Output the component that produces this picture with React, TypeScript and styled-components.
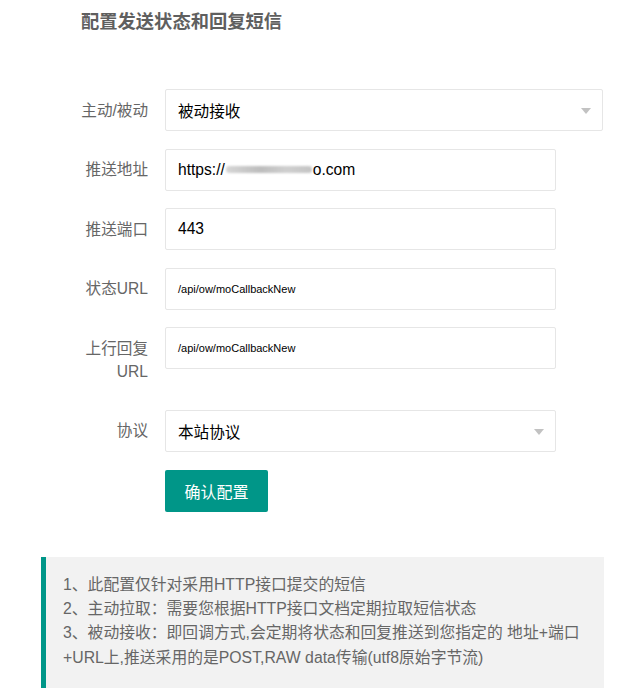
import React from "react";
import styled, { createGlobalStyle } from "styled-components";

const GlobalStyle = createGlobalStyle`
    html, body {
        margin: 0;
        padding: 0;
        background: #fff;
    }
    body {
        font-family: "Liberation Sans", "Noto Sans CJK SC", sans-serif;
        color: #666;
    }
    * {
        box-sizing: border-box;
    }
`;

const Page = styled.div`
    width: 623px;
    padding: 9px 0 11px;
`;

const Title = styled.h2`
    margin: 0 0 0 81px;
    font-size: 18.3px;
    line-height: 25px;
    font-weight: bold;
    color: #5f5f5f;
`;

const Form = styled.div`
    margin-top: 55px;
    display: flex;
    flex-direction: column;
    gap: 17.6px;
`;

const Row = styled.div`
    display: flex;
    align-items: flex-start;
`;

const Label = styled.label`
    width: 165px;
    flex-shrink: 0;
    padding: 9.5px 17px 9.5px 0;
    text-align: right;
    font-size: 15.6px;
    line-height: 23px;
    color: #666;
`;

const Field = styled.div<{ $wide?: boolean }>`
    position: relative;
    width: ${(p) => (p.$wide ? "438px" : "391px")};
    height: 42px;
    border: 1px solid #e6e6e6;
    border-radius: 2px;
    background: #fff;
    padding-left: 12px;
    display: flex;
    align-items: center;
    color: #000;
    font-size: 15.6px;
`;

const SmallText = styled.span`
    font-size: 11px;
    color: #000;
`;

const Blurred = styled.span`
    display: inline-block;
    width: 86px;
    height: 7px;
    margin: 0 1px;
    border-radius: 3px;
    background: linear-gradient(90deg, #d6d6d6, #bdbdbd 40%, #cfcfcf 70%, #c4c4c4);
    filter: blur(1px);
`;

const Arrow = styled.span`
    position: absolute;
    right: 11px;
    top: 18px;
    width: 0;
    height: 0;
    border-left: 5.5px solid transparent;
    border-right: 5.5px solid transparent;
    border-top: 6px solid #c2c2c2;
`;

const ButtonRow = styled.div`
    padding-left: 165px;
`;

const Button = styled.button`
    width: 103px;
    height: 42px;
    border: none;
    border-radius: 2px;
    background: #009688;
    color: #fff;
    font-family: inherit;
    font-size: 16px;
    cursor: pointer;
`;

const Notice = styled.div`
    margin: 45px 19px 0 41px;
    background: #f2f2f2;
    border-left: 5px solid #009688;
    padding: 16px 18px 18px 17px;
    font-size: 15.8px;
    line-height: 24.4px;
    color: #666;
`;

const fields = [
    { label: "推送地址", value: "url" },
    { label: "推送端口", value: "443" },
];

const App: React.FC = () => {
    return (
        <Page>
            <GlobalStyle />
            <Title>配置发送状态和回复短信</Title>
            <Form>
                <Row>
                    <Label>主动/被动</Label>
                    <Field $wide>
                        被动接收
                        <Arrow />
                    </Field>
                </Row>
                {fields.map((f) => (
                    <Row key={f.label}>
                        <Label>{f.label}</Label>
                        <Field>
                            {f.value === "url" ? (
                                <>
                                    https://
                                    <Blurred />
                                    o.com
                                </>
                            ) : (
                                f.value
                            )}
                        </Field>
                    </Row>
                ))}
                <Row>
                    <Label>状态URL</Label>
                    <Field>
                        <SmallText>/api/ow/moCallbackNew</SmallText>
                    </Field>
                </Row>
                <Row>
                    <Label>
                        上行回复
                        <br />
                        URL
                    </Label>
                    <Field>
                        <SmallText>/api/ow/moCallbackNew</SmallText>
                    </Field>
                </Row>
                <Row>
                    <Label>协议</Label>
                    <Field>
                        本站协议
                        <Arrow />
                    </Field>
                </Row>
                <ButtonRow>
                    <Button>确认配置</Button>
                </ButtonRow>
            </Form>
            <Notice>
                1、此配置仅针对采用HTTP接口提交的短信
                <br />
                2、主动拉取：需要您根据HTTP接口文档定期拉取短信状态
                <br />
                3、被动接收：即回调方式,会定期将状态和回复推送到您指定的 地址+端口+URL上,推送采用的是POST,RAW data传输(utf8原始字节流)
            </Notice>
        </Page>
    );
};

export default App;
